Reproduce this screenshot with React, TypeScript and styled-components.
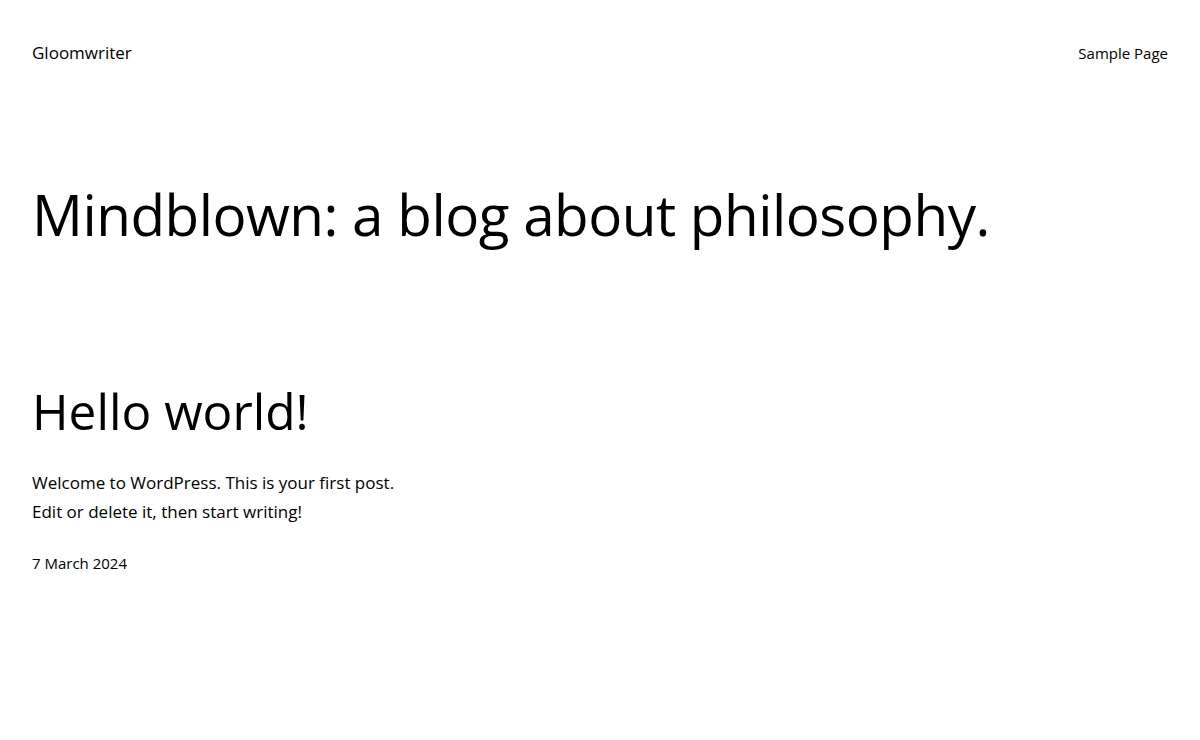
import styled, { createGlobalStyle } from "styled-components";

const GlobalStyle = createGlobalStyle`
  html, body {
    margin: 0;
    padding: 0;
    background: #ffffff;
  }
  body {
    font-family: "Open Sans", "Noto Sans", "Liberation Sans", sans-serif;
    color: #000000;
    -webkit-font-smoothing: antialiased;
  }
`;

const Page = styled.div`
  width: 1200px;
  min-height: 740px;
  box-sizing: border-box;
  padding: 0 32px;
  display: flex;
  flex-direction: column;
`;

const Header = styled.header`
  display: flex;
  justify-content: space-between;
  align-items: center;
  padding-top: 41px;
  height: 24px;
`;

const SiteTitle = styled.a`
  font-size: 17px;
  line-height: 24px;
  color: #000;
  text-decoration: none;
`;

const Nav = styled.nav`
  display: flex;
  gap: 24px;
`;

const NavLink = styled.a`
  font-size: 15px;
  line-height: 24px;
  color: #000;
  text-decoration: none;
`;

const Hero = styled.h1`
  margin: 110px 0 0;
  font-size: 56.6px;
  font-weight: 400;
  line-height: 80px;
  letter-spacing: -0.5px;
`;

const Post = styled.article`
  margin-top: 126px;
  display: flex;
  flex-direction: column;
`;

const PostTitle = styled.h2`
  margin: 0;
  font-size: 49.6px;
  font-weight: 400;
  line-height: 60px;
`;

const Excerpt = styled.p`
  margin: 27px 0 0;
  font-size: 17px;
  line-height: 29px;
`;

const PostDate = styled.time`
  margin-top: 27px;
  font-size: 15px;
  line-height: 20px;
`;

export default function App() {
  return (
    <>
      <GlobalStyle />
      <Page>
        <Header>
          <SiteTitle href="#">Gloomwriter</SiteTitle>
          <Nav>
            <NavLink href="#">Sample Page</NavLink>
          </Nav>
        </Header>
        <Hero>Mindblown: a blog about philosophy.</Hero>
        <Post>
          <PostTitle>Hello world!</PostTitle>
          <Excerpt>
            Welcome to WordPress. This is your first post.
            <br />
            Edit or delete it, then start writing!
          </Excerpt>
          <PostDate dateTime="2024-03-07">7 March 2024</PostDate>
        </Post>
      </Page>
    </>
  );
}
